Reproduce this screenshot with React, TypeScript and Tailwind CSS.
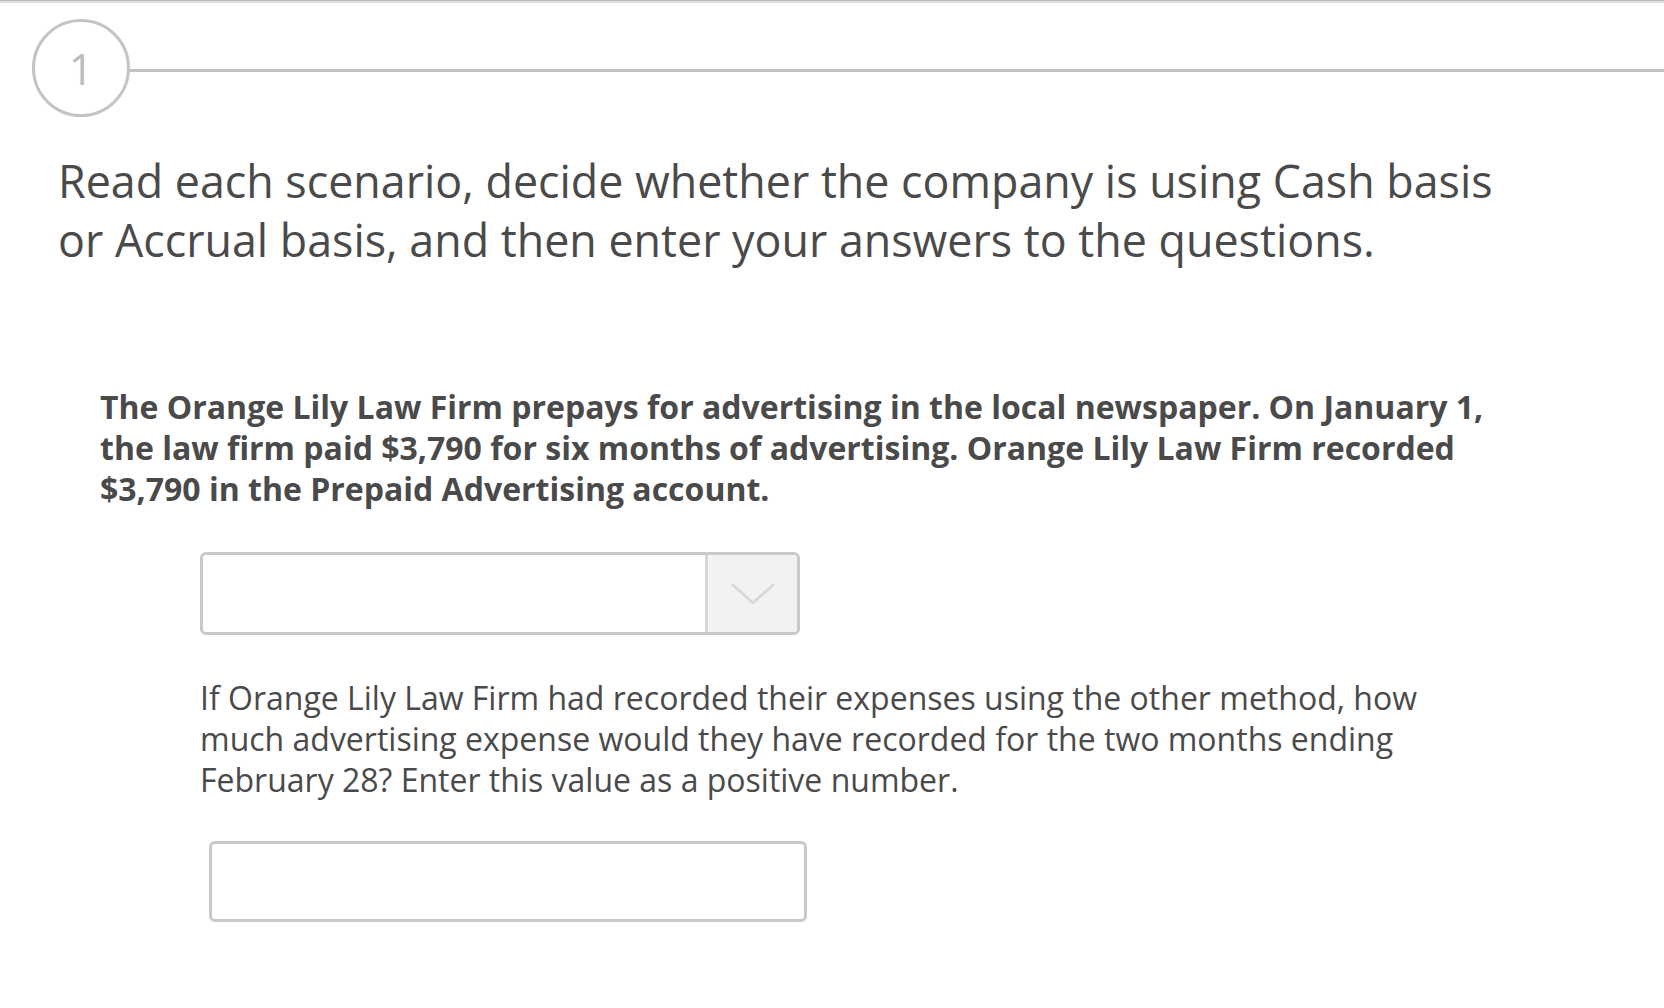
const App = () => {
  return (
    <div className="min-h-screen w-full bg-white font-['Open_Sans',_sans-serif] text-[#4a4a4a]">
      {/* top edge */}
      <div className="h-px bg-[#bdbdbd]" />
      <div className="h-[2px] bg-[#dedede]" />

      {/* step header */}
      <div className="mt-[16px] flex items-center pl-[32px]">
        <div className="flex h-[98px] w-[98px] shrink-0 items-center justify-center rounded-full border-[3px] border-[#c4c4c4]">
          <span className="text-[43px] leading-none text-[#bdbdbd]">1</span>
        </div>
        <div className="mt-[4px] h-[3px] flex-1 bg-[#c2c2c2]" />
      </div>

      {/* instructions */}
      <h1 className="mt-[35px] pl-[58px] text-[44.8px] leading-[58.5px] font-normal">
        Read each scenario, decide whether the company is using Cash basis
        <br />
        or Accrual basis, and then enter your answers to the questions.
      </h1>

      {/* scenario */}
      <p className="mt-[117px] pl-[100px] text-[32px] leading-[41px] font-bold">
        The Orange Lily Law Firm prepays for advertising in the local newspaper. On January 1,
        <br />
        the law firm paid $3,790 for six months of advertising. Orange Lily Law Firm recorded
        <br />
        $3,790 in the Prepaid Advertising account.
      </p>

      <div className="mt-[43px] pl-[200px]">
        <div className="flex h-[83px] w-[600px] overflow-hidden rounded-[6px] border-[3px] border-[#c9c9c9] bg-white">
          <div className="flex-1" />
          <div className="flex w-[92px] items-center justify-center border-l-[3px] border-[#d6d6d6] bg-[#f2f2f2]">
            <svg width="44" height="24" viewBox="0 0 44 24" fill="none">
              <polyline
                points="2,3 22,21 42,3"
                stroke="#d9d9d9"
                strokeWidth="3"
                strokeLinecap="round"
                strokeLinejoin="round"
              />
            </svg>
          </div>
        </div>
      </div>

      <p className="mt-[42px] pl-[200px] text-[32px] leading-[41px]">
        If Orange Lily Law Firm had recorded their expenses using the other method, how
        <br />
        much advertising expense would they have recorded for the two months ending
        <br />
        February 28? Enter this value as a positive number.
      </p>

      <div className="mt-[41px] pl-[209px]">
        <div className="h-[81px] w-[598px] rounded-[6px] border-[3px] border-[#c9c9c9] bg-white" />
      </div>
    </div>
  );
};

export default App;
